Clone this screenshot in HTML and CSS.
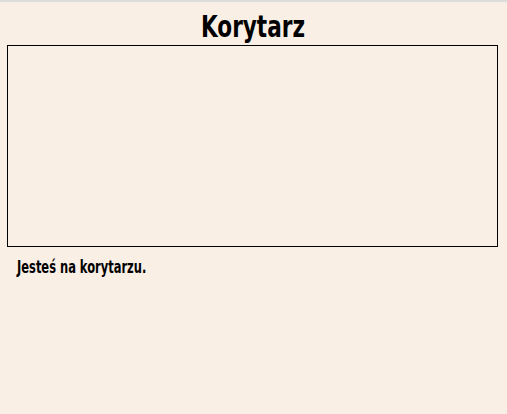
FILE: index.html
```html
<!DOCTYPE html>
<html lang="pl">
<head>
<meta charset="utf-8">
<title>Korytarz</title>
<link rel="stylesheet" href="styles.css">
</head>
<body>
<div class="page">
  <h1 class="title"><span class="squeeze">Korytarz</span></h1>
  <div class="scene"></div>
  <p class="message"><span class="squeeze">Jesteś na korytarzu.</span></p>
</div>
</body>
</html>
```
FILE: styles.css
```css
html, body {
  margin: 0;
  padding: 0;
  height: 100%;
}
body {
  background: #faefe5;
  border-top: 2px solid #dcdcdc;
  box-sizing: border-box;
  font-family: "DejaVu Sans Condensed", "DejaVu Sans", sans-serif;
  font-weight: bold;
  color: #000;
}
.page {
  display: flex;
  flex-direction: column;
  padding: 0 9px 0 7px;
}
.title {
  margin: 0;
  height: 43px;
  box-sizing: border-box;
  padding-bottom: 3px;
  display: flex;
  justify-content: center;
  align-items: flex-end;
  font-size: 30px;
  line-height: 30px;
}
.squeeze {
  display: inline-block;
}
.title .squeeze {
  transform-origin: center;
  transform: scaleX(0.8);
}
.scene {
  height: 200px;
  border: 1px solid #000;
}
.message {
  margin: 11px 0 0 10px;
  font-size: 17px;
  line-height: 18px;
}
.message .squeeze {
  transform-origin: left center;
  transform: scaleX(0.75);
}
```
